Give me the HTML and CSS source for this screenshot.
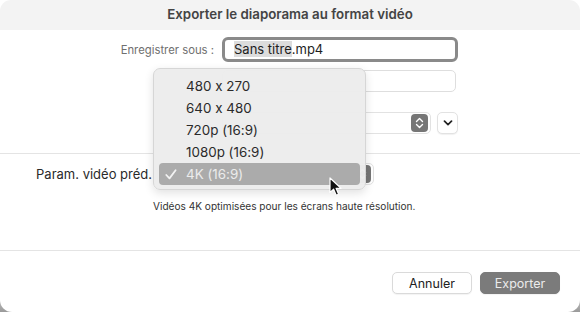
FILE: index.html
```html
<!DOCTYPE html>
<html lang="fr">
<head>
    <meta charset="UTF-8">
    <meta name="viewport" content="width=device-width, initial-scale=1.0">
    <title>Exporter le diaporama au format vidéo</title>
    <link rel="stylesheet" href="styles.css">
</head>
<body>
    <div class="window">
        <!-- Title bar -->
        <div class="titlebar">Exporter le diaporama au format vidéo</div>

        <!-- File name and destination -->
        <div class="section top">
            <div class="form-row">
                <label class="label">Enregistrer sous :</label>
                <div class="name-field"><span class="selected-text">Sans titre</span>.mp4</div>
            </div>
            <div class="form-row">
                <label class="label"></label>
                <div class="text-field"></div>
            </div>
            <div class="form-row">
                <label class="label"></label>
                <div class="where">
                    <div class="popup wide">
                        <span class="stepper dark">
                            <svg width="9" height="12" viewBox="0 0 9 12"><path d="M1.5 4.5 L4.5 1.5 L7.5 4.5 M1.5 7.5 L4.5 10.5 L7.5 7.5" fill="none" stroke="#fff" stroke-width="1.4" stroke-linecap="round" stroke-linejoin="round"/></svg>
                        </span>
                    </div>
                    <button class="expand">
                        <svg width="10" height="6" viewBox="0 0 10 6"><path d="M1.5 1.2 L5 4.6 L8.5 1.2" fill="none" stroke="#222" stroke-width="1.7" stroke-linecap="round" stroke-linejoin="round"/></svg>
                    </button>
                </div>
            </div>
        </div>

        <!-- Resolution -->
        <div class="section middle">
            <div class="preset-row">
                <label class="preset-label">Param. vidéo préd.</label>
                <div class="popup preset">
                    <span class="stepper dark">
                        <svg width="9" height="12" viewBox="0 0 9 12"><path d="M1.5 4.5 L4.5 1.5 L7.5 4.5 M1.5 7.5 L4.5 10.5 L7.5 7.5" fill="none" stroke="#fff" stroke-width="1.4" stroke-linecap="round" stroke-linejoin="round"/></svg>
                    </span>
                </div>
            </div>
            <p class="hint">Vidéos 4K optimisées pour les écrans haute résolution.</p>
        </div>

        <!-- Buttons -->
        <div class="footer">
            <button class="btn">Annuler</button>
            <button class="btn default">Exporter</button>
        </div>

        <!-- Open popup menu -->
        <ul class="menu">
            <li>480 x 270</li>
            <li>640 x 480</li>
            <li>720p (16:9)</li>
            <li>1080p (16:9)</li>
            <li class="checked">
                <svg class="check" width="12" height="11" viewBox="0 0 12 11"><path d="M1.3 6 L4.5 9.4 L10.6 1.3" fill="none" stroke="#f2f2f2" stroke-width="1.8" stroke-linecap="round" stroke-linejoin="round"/></svg>
                4K (16:9)
            </li>
        </ul>

        <!-- Mouse pointer -->
        <svg class="cursor" width="14" height="20" viewBox="0 0 14 20">
            <path d="M1 1 L1 15.5 L4.6 12.2 L7.2 18.2 L9.6 17.2 L7.1 11.3 L12 11.3 Z" fill="#111" stroke="#fff" stroke-width="1.2" stroke-linejoin="round"/>
        </svg>
    </div>
</body>
</html>
```

FILE: styles.css
```css
* {
    box-sizing: border-box;
}
body {
    margin: 0;
    width: 580px;
    height: 312px;
    overflow: hidden;
    font-family: Inter, "Noto Sans", sans-serif;
    font-feature-settings: "calt" 0;
    background: linear-gradient(to bottom, #ffffff 88%, #9a9a9a 100%);
}
.window {
    position: relative;
    width: 580px;
    height: 312px;
    background-color: #ffffff;
    border-radius: 11px 11px 12px 12px;
    overflow: hidden;
}
.titlebar {
    height: 30px;
    background-color: #f3f3f3;
    color: #444;
    font-size: 13.3px;
    font-weight: 600;
    text-align: center;
    line-height: 29px;
}
.section {
    border-bottom: 1px solid #e4e4e4;
}
.top {
    height: 124px;
    padding-top: 7px;
}
.form-row {
    display: grid;
    grid-template-columns: 214px 1fr;
    column-gap: 8px;
    align-items: center;
    margin-bottom: 8px;
}
.form-row:nth-child(2) {
    margin-bottom: 20px;
}
.label {
    text-align: right;
    font-size: 11.3px;
    color: #6f6f6f;
}
.name-field {
    width: 236px;
    height: 25px;
    border: 3px solid #8a8a8a;
    border-radius: 6px;
    padding: 0 9px;
    font-size: 13px;
    line-height: 19px;
    color: #1e1e1e;
}
.selected-text {
    background-color: #dcdcdc;
}
.text-field {
    width: 234px;
    height: 22px;
    border: 1px solid #dedede;
    border-radius: 5px;
}
.where {
    display: flex;
    align-items: center;
    gap: 6px;
}
.popup {
    display: flex;
    justify-content: flex-end;
    align-items: center;
    height: 22px;
    border: 1px solid #e2e2e2;
    border-radius: 5px;
    padding-right: 2px;
    background-color: #fff;
}
.popup.wide {
    width: 209px;
}
.stepper {
    width: 17px;
    height: 18px;
    border-radius: 4px;
    display: flex;
    align-items: center;
    justify-content: center;
}
.stepper.dark {
    background-color: #767676;
}
.expand {
    width: 21px;
    height: 22px;
    border: 1px solid #e2e2e2;
    border-radius: 5px;
    background-color: #fff;
    padding: 0;
    display: flex;
    align-items: center;
    justify-content: center;
    box-shadow: 0 1px 1px rgba(0, 0, 0, 0.06);
}
.middle {
    height: 97px;
    padding-top: 9px;
}
.preset-row {
    display: flex;
    align-items: center;
    gap: 5px;
}
.preset-label {
    width: 152px;
    text-align: right;
    font-size: 13px;
    color: #2a2a2a;
}
.popup.preset {
    width: 217px;
    height: 22px;
}
.hint {
    margin: 15px 0 0 153px;
    font-size: 10.1px;
    color: #333;
}
.footer {
    display: flex;
    justify-content: flex-end;
    gap: 8px;
    padding: 21px 20px 0 0;
}
.btn {
    width: 80px;
    height: 22px;
    border: 1px solid #dadada;
    border-radius: 5px;
    background-color: #fff;
    font-family: Inter, "Noto Sans", sans-serif;
    font-size: 12.5px;
    color: #222;
    padding: 0;
    box-shadow: 0 1px 1px rgba(0, 0, 0, 0.05);
}
.btn.default {
    background-color: #7b7b7b;
    border-color: #7b7b7b;
    color: #ececec;
}
.menu {
    position: absolute;
    left: 153px;
    top: 68px;
    width: 213px;
    margin: 0;
    padding: 6px 5px 4px;
    list-style: none;
    background-color: rgba(236, 236, 236, 0.97);
    border: 1px solid #d6d6d6;
    border-radius: 7px;
    box-shadow: 0 3px 10px rgba(0, 0, 0, 0.12);
}
.menu li {
    position: relative;
    height: 22px;
    line-height: 22px;
    padding-left: 27px;
    font-size: 13.4px;
    color: #2a2a2a;
    border-radius: 4px;
}
.menu li.checked {
    background-color: #ababab;
    color: #ececec;
}
.check {
    position: absolute;
    left: 6px;
    top: 6px;
}
.cursor {
    position: absolute;
    left: 329px;
    top: 177px;
}
```
